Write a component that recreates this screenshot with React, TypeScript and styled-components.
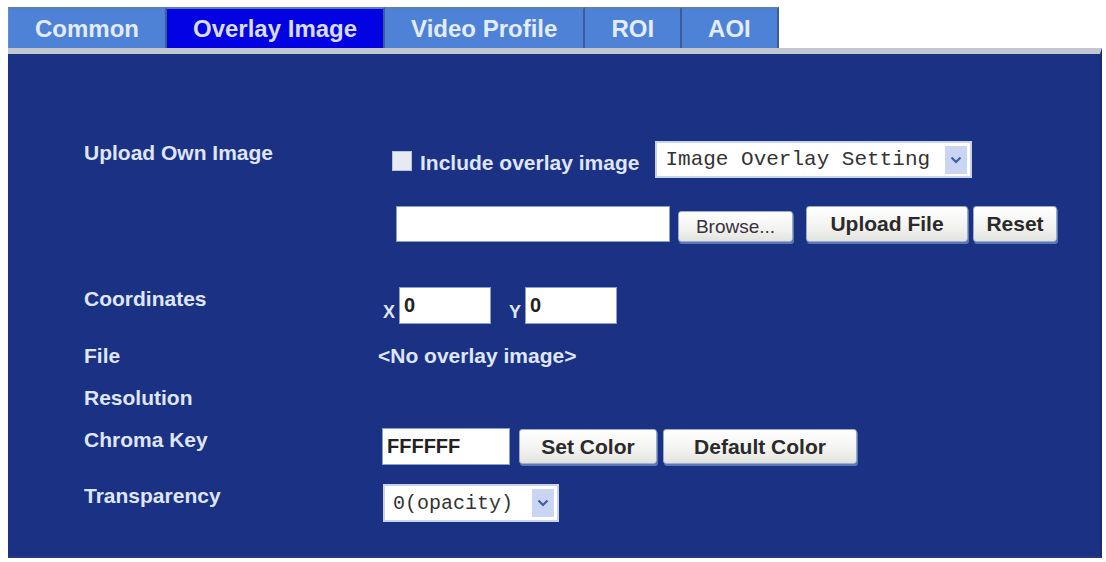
import styled, { createGlobalStyle } from 'styled-components';

const Global = createGlobalStyle`
    body {
        margin: 0;
        background: #ffffff;
        font-family: "Liberation Sans", Arial, sans-serif;
    }
`;

const Page = styled.div`
    padding: 7px 4px 0 8px;
`;

const TabBar = styled.div`
    display: flex;
    height: 41px;
`;

const Tab = styled.div<{ $active?: boolean }>`
    display: flex;
    align-items: center;
    padding: 0 26px;
    font-size: 24px;
    font-weight: bold;
    color: ${p => (p.$active ? '#d8dcff' : '#e4ecfb')};
    background: ${p => (p.$active ? '#0202e2' : '#4d82d6')};
    border-top: 2px solid #5a7fb8;
    border-right: 2px solid #3d5b94;
    &:first-child {
        border-left: 1px solid #6a8cc4;
    }
`;

const Panel = styled.div`
    width: 1094px;
    height: 510px;
    box-sizing: border-box;
    background: #1b3183;
    border-top: 6px solid #c3c7cf;
    border-right: 2px solid #172a6e;
    border-bottom: 2px solid #243a86;
    padding: 87px 0 0 76px;
    color: #dfe6fb;
`;

const Row = styled.div<{ $top?: number }>`
    display: flex;
    align-items: flex-start;
    margin-top: ${p => p.$top ?? 0}px;
`;

const Label = styled.div`
    width: 298px;
    flex: none;
    font-size: 21px;
    font-weight: bold;
    line-height: 24px;
`;

const Stack = styled.div`
    display: flex;
    flex-direction: column;
    gap: 28px;
`;

const Line = styled.div<{ $indent?: number }>`
    display: flex;
    align-items: center;
    margin-left: ${p => p.$indent ?? 0}px;
`;

const Check = styled.span`
    width: 20px;
    height: 20px;
    background: #e6eaf2;
    border: 1px solid #b8c4dc;
    box-sizing: border-box;
    margin-top: 2px;
`;

const Text = styled.span<{ $size?: number }>`
    font-size: ${p => p.$size ?? 21}px;
    font-weight: bold;
    line-height: 24px;
`;

const Select = styled.div<{ $w: number; $h: number }>`
    display: flex;
    align-items: center;
    justify-content: space-between;
    width: ${p => p.$w}px;
    height: ${p => p.$h}px;
    box-sizing: border-box;
    background: #ffffff;
    border: 2px solid #c9d3e6;
    padding: 0 3px 0 8px;
    font-family: "Liberation Mono", "Courier New", monospace;
    color: #333333;
`;

const Arrow = styled.span`
    display: flex;
    align-items: center;
    justify-content: center;
    width: 22px;
    height: 28px;
    background: #c9d5f2;
`;

const Field = styled.div<{ $w: number; $h: number }>`
    display: flex;
    align-items: center;
    width: ${p => p.$w}px;
    height: ${p => p.$h}px;
    box-sizing: border-box;
    background: #ffffff;
    border: 1px solid #8aa0c8;
    padding-left: 4px;
    font-size: 20px;
    font-weight: bold;
    color: #222222;
`;

const Button = styled.div<{ $w: number; $h: number; $plain?: boolean }>`
    display: flex;
    align-items: center;
    justify-content: center;
    width: ${p => p.$w}px;
    height: ${p => p.$h}px;
    box-sizing: border-box;
    background: linear-gradient(#ffffff, #f2f2f0 60%, #e2e2de);
    border: 1px solid #9aaccc;
    border-radius: 3px;
    box-shadow: 1px 2px 0 #5c78b4;
    font-size: ${p => (p.$plain ? 19 : 21)}px;
    font-weight: ${p => (p.$plain ? 'normal' : 'bold')};
    color: ${p => (p.$plain ? '#3a3040' : '#2a2a2a')};
`;

const Chevron = () => (
    <svg width="12" height="8" viewBox="0 0 12 8">
        <path d="M1.5 1.5 L6 6 L10.5 1.5" fill="none" stroke="#3f5ea8" strokeWidth="2.2" />
    </svg>
);

export default function App() {
    return (
        <Page>
            <Global />
            <TabBar>
                <Tab>Common</Tab>
                <Tab $active>Overlay Image</Tab>
                <Tab>Video Profile</Tab>
                <Tab>ROI</Tab>
                <Tab>AOI</Tab>
            </TabBar>
            <Panel>
                <Row>
                    <Label>Upload Own Image</Label>
                    <Stack>
                        <Line $indent={10}>
                            <Check />
                            <Text style={{ marginLeft: 8, marginTop: 6 }}>Include overlay image</Text>
                            <Select $w={317} $h={37} style={{ marginLeft: 16 }}>
                                <span style={{ fontSize: 21 }}>Image Overlay Setting</span>
                                <Arrow><Chevron /></Arrow>
                            </Select>
                        </Line>
                        <Line $indent={14} style={{ alignItems: 'flex-end' }}>
                            <Field $w={274} $h={36} />
                            <Button $w={115} $h={31} $plain style={{ marginLeft: 8 }}>Browse...</Button>
                            <Button $w={162} $h={36} style={{ marginLeft: 13 }}>Upload File</Button>
                            <Button $w={84} $h={36} style={{ marginLeft: 5 }}>Reset</Button>
                        </Line>
                    </Stack>
                </Row>
                <Row $top={45}>
                    <Label>Coordinates</Label>
                    <Line $indent={1} style={{ alignItems: 'flex-end' }}>
                        <Text $size={18} style={{ marginRight: 4 }}>X</Text>
                        <Field $w={92} $h={37}>0</Field>
                        <Text $size={18} style={{ marginLeft: 18, marginRight: 4 }}>Y</Text>
                        <Field $w={92} $h={37}>0</Field>
                    </Line>
                </Row>
                <Row $top={20}>
                    <Label>File</Label>
                    <Text style={{ marginLeft: -4 }}>&lt;No overlay image&gt;</Text>
                </Row>
                <Row $top={18}>
                    <Label>Resolution</Label>
                </Row>
                <Row $top={18}>
                    <Label>Chroma Key</Label>
                    <Line>
                        <Field $w={128} $h={37}>FFFFFF</Field>
                        <Button $w={138} $h={35} style={{ marginLeft: 9 }}>Set Color</Button>
                        <Button $w={194} $h={35} style={{ marginLeft: 6 }}>Default Color</Button>
                    </Line>
                </Row>
                <Row $top={19}>
                    <Label>Transparency</Label>
                    <Line $indent={1}>
                        <Select $w={176} $h={38}>
                            <span style={{ fontSize: 20 }}>0(opacity)</span>
                            <Arrow><Chevron /></Arrow>
                        </Select>
                    </Line>
                </Row>
            </Panel>
        </Page>
    );
}
